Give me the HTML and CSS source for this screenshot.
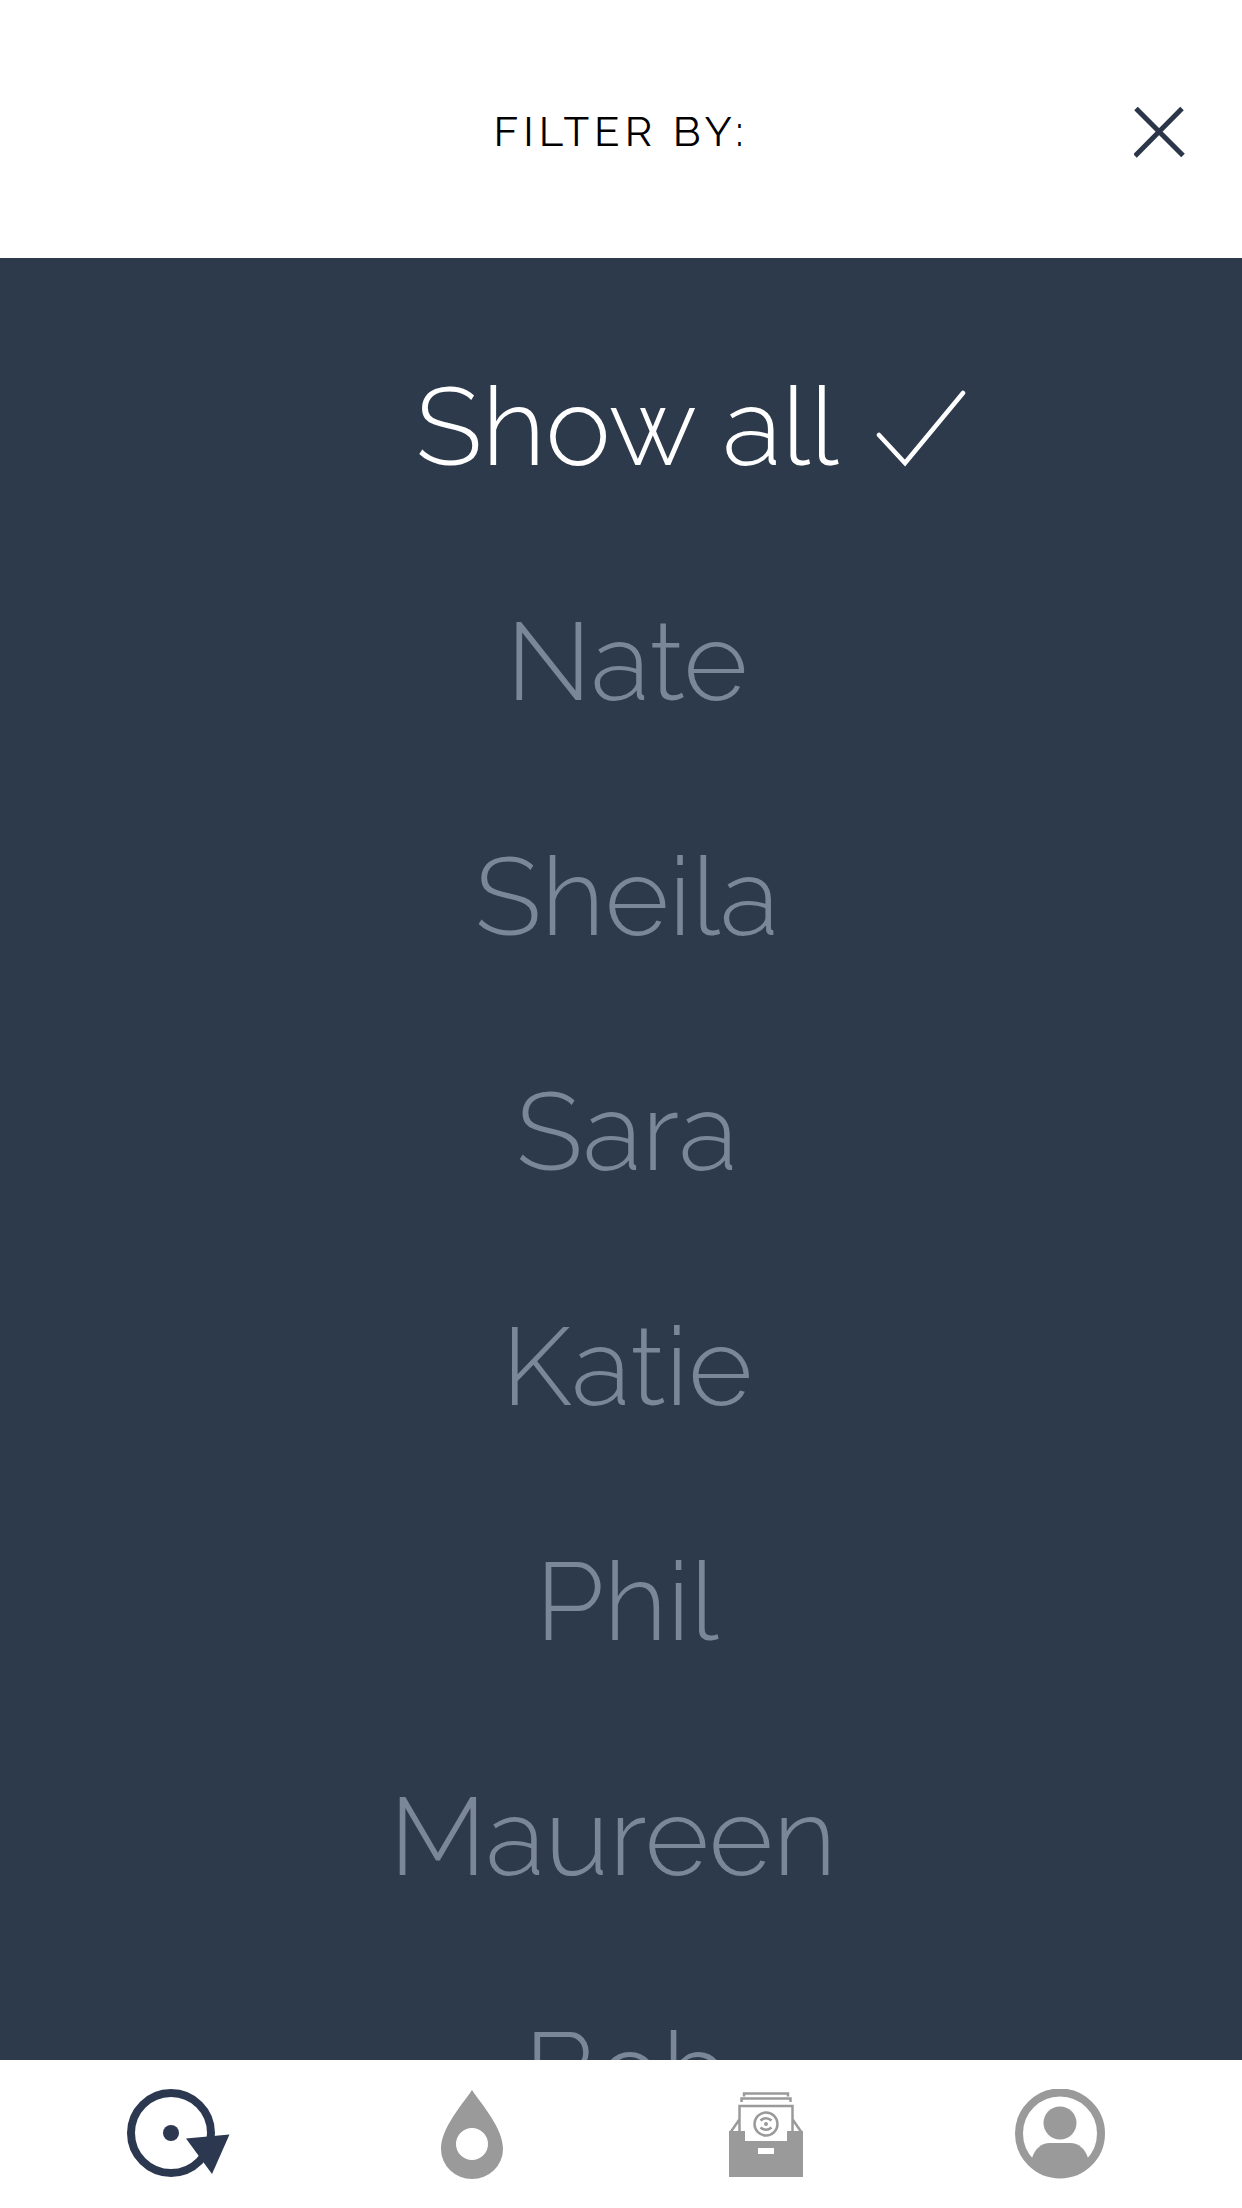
FILE: index.html
```html
<!DOCTYPE html>
<html lang="en">
<head>
<meta charset="utf-8">
<meta name="viewport" content="width=device-width, initial-scale=1">
<title>Filter by</title>
<link rel="stylesheet" href="styles.css">
</head>
<body>
<div class="screen">
  <header class="header">
    <h1 class="title">FILTER BY:</h1>
    <button class="close" type="button" aria-label="Close">
      <svg width="52" height="52" viewBox="0 0 52 52" fill="none" stroke="#2b3648" stroke-width="5" aria-hidden="true"><path d="M2 2.500 49 49.500M48 2.500 1 50"/></svg>
    </button>
  </header>
  <main class="filters">
    <ul class="list">
      <li class="row"><button class="option selected" type="button" aria-pressed="true">Show all</button>
        <svg class="check" width="90" height="80" viewBox="0 0 90 80" fill="none" stroke="#fff" stroke-width="4.500" stroke-linecap="round" aria-hidden="true"><path d="M3 48 29 76 87 6"/></svg>
      </li>
      <li class="row"><button class="option" type="button" aria-pressed="false">Nate</button></li>
      <li class="row"><button class="option" type="button" aria-pressed="false">Sheila</button></li>
      <li class="row"><button class="option" type="button" aria-pressed="false">Sara</button></li>
      <li class="row"><button class="option" type="button" aria-pressed="false">Katie</button></li>
      <li class="row"><button class="option" type="button" aria-pressed="false">Phil</button></li>
      <li class="row"><button class="option" type="button" aria-pressed="false">Maureen&nbsp;</button></li>
      <li class="row"><button class="option" type="button" aria-pressed="false">Bob</button></li>
    </ul>
  </main>
  <nav class="tabs" aria-label="Main">
    <a class="tab active" href="#spin" aria-label="Spin" aria-current="page">
      <svg width="104" height="90" viewBox="0 0 104 90" aria-hidden="true"><circle cx="45" cy="44" r="40" fill="none" stroke="currentColor" stroke-width="8"/><circle cx="45" cy="44" r="8" fill="currentColor"/><path d="M60 49.500 103.500 45.500 86 85Z" fill="currentColor"/></svg>
    </a>
    <a class="tab" href="#drop" aria-label="Drop">
      <svg width="62" height="90" viewBox="0 0 62 90" aria-hidden="true"><path fill="currentColor" fill-rule="evenodd" d="M31 1C41 16 62 39 62 60A31 30 0 0 1 0 60C0 39 21 16 31 1ZM31 39a16 16 0 1 0 0 32a16 16 0 0 0 0-32Z"/></svg>
    </a>
    <a class="tab" href="#box" aria-label="Collection">
      <svg width="74" height="90" viewBox="0 0 74 90" aria-hidden="true"><g fill="none" stroke="currentColor" stroke-width="2.500"><path d="M15 7.500V4.500H59V7.500M12.500 13V9.500H61.500V13"/><path d="M10.500 46V17H63.500V46M10 31 1 44M64 31 73 44"/><circle cx="37" cy="35" r="11.500"/><path d="M31.500 31.500Q37 27 42.500 31.500M31.500 38.500Q37 43 42.500 38.500"/></g><circle cx="37" cy="35" r="2" fill="currentColor"/><path fill="currentColor" fill-rule="evenodd" d="M0 42H16V52H58V42H74V88H0ZM29 59V65H45V59Z"/></svg>
    </a>
    <a class="tab" href="#profile" aria-label="Profile">
      <svg width="90" height="90" viewBox="0 0 90 90" aria-hidden="true"><circle cx="45" cy="44.500" r="41" fill="none" stroke="currentColor" stroke-width="8"/><circle cx="45" cy="34" r="16.500" fill="currentColor"/><path fill="currentColor" d="M17 69C20 60 26 54 35 54H55C64 54 70 60 73 69L68 78Q45 94 22 78Z"/></svg>
    </a>
  </nav>
</div>
</body>
</html>
```
FILE: styles.css
```css
* { box-sizing: border-box; }

body {
  margin: 0;
  font-family: Raleway, Lato, sans-serif;
}

.screen {
  display: flex;
  flex-direction: column;
  height: 100vh;
  background: #2d3a4b;
}

.header {
  display: grid;
  grid-template-columns: 1fr auto 1fr;
  align-items: center;
  flex: none;
  padding: 104px 56px 98px;
  background: #fff;
}

.title {
  grid-column: 2;
  margin: 0;
  color: #000;
  font-size: 42px;
  font-weight: 400;
  line-height: 56px;
  letter-spacing: 5px;
}

.close {
  justify-self: end;
  height: 52px;
  padding: 0;
  border: 0;
  background: none;
}

.close svg,
.tab svg { display: block; }

.filters {
  flex: 1;
  min-height: 0;
  overflow-y: auto;
  scrollbar-width: none;
}

.list {
  margin: 0;
  padding: 51px 0 0 12px;
  list-style: none;
}

.row {
  display: grid;
  grid-template-columns: 1fr auto 1fr;
  align-items: center;
  height: 235px;
}

.option {
  grid-column: 2;
  padding: 0;
  border: 0;
  background: none;
  color: #7a8799;
  font: inherit;
  font-size: 110px;
  font-weight: 300;
  line-height: 132px;
}

.selected { color: #fff; }

.check { margin-left: 38px; }

.tabs {
  display: grid;
  grid-template-columns: repeat(4, 1fr);
  flex: none;
  padding: 29px 35px 29px 31px;
  background: #fff;
}

.tab {
  display: grid;
  justify-items: center;
  color: #9a9a9a;
}

.active { color: #2b3850; }
```
